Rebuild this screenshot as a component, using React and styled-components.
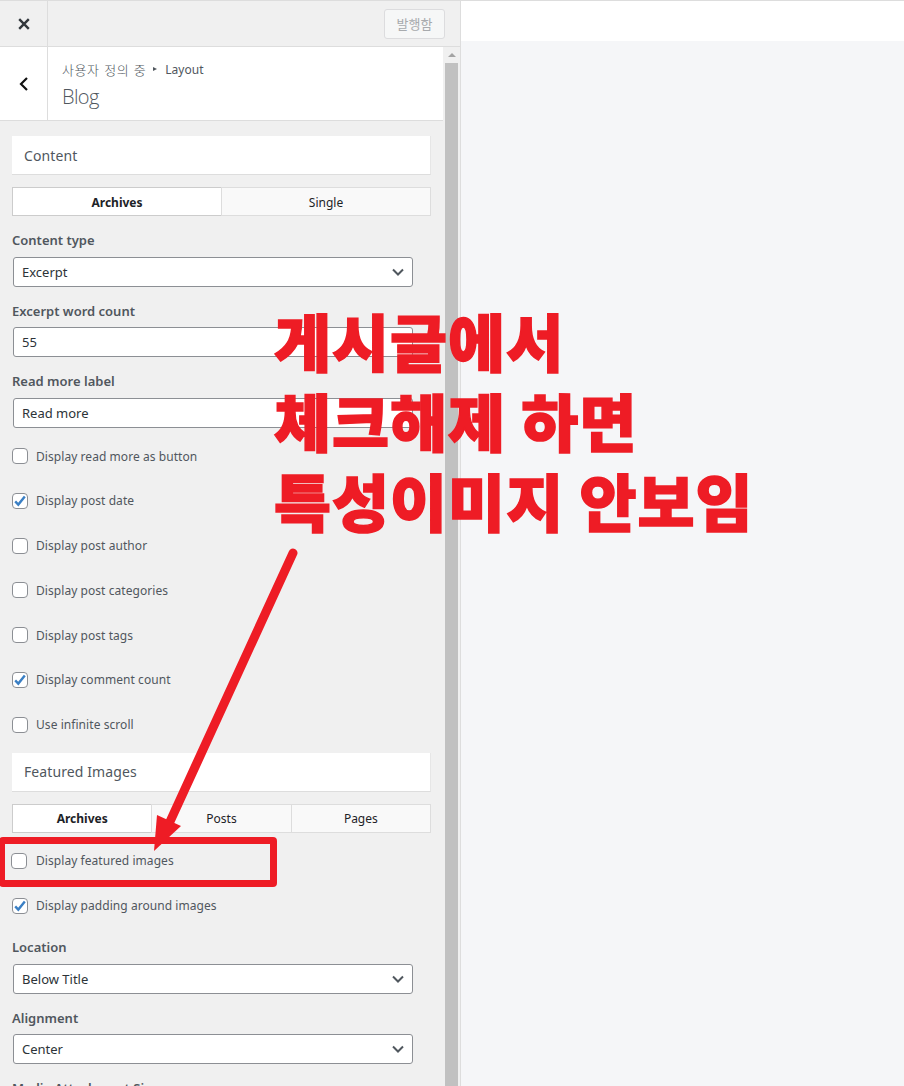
import React from 'react'
import styled, { createGlobalStyle } from 'styled-components'

const Global = createGlobalStyle`
  html, body { margin: 0; padding: 0; height: 100%; }
  body {
    background: #f5f6f8;
    font-family: "Noto Sans", "Noto Sans CJK KR", sans-serif;
    overflow: hidden;
  }
  * { box-sizing: border-box; }
`

const Page = styled.div`
  position: relative;
  display: flex;
  width: 904px;
  height: 1086px;
  overflow: hidden;
`
const Sidebar = styled.aside`
  width: 461px;
  height: 1086px;
  flex: none;
  display: flex;
  flex-direction: column;
  background: #f0f0f0;
  border-right: 1px solid #dddddd;
`
const Topbar = styled.header`
  height: 47px;
  flex: none;
  display: flex;
  align-items: center;
  justify-content: space-between;
  padding-right: 15px;
  border-top: 1px solid #dddddd;
  border-bottom: 1px solid #dddddd;
`
const CloseButton = styled.button`
  width: 48px;
  height: 45px;
  display: flex;
  align-items: center;
  justify-content: center;
  padding: 0;
  border: none;
  border-right: 1px solid #dddddd;
  background: none;
`
const PublishButton = styled.button`
  width: 61px;
  height: 30px;
  border: 1px solid #dcdcde;
  border-radius: 3px;
  background: #f6f7f7;
  color: #a7aaad;
  font-family: "Noto Sans CJK KR", sans-serif;
  font-size: 13px;
  padding: 0;
`
const Main = styled.div`
  flex: 1;
  min-height: 0;
  display: flex;
`
const Scroller = styled.div`
  width: 445px;
  flex: none;
  overflow: hidden;
`
const Scrollbar = styled.div`
  width: 13px;
  flex: none;
  display: flex;
  flex-direction: column;
  align-items: center;
`
const ScrollArrow = styled.span`
  width: 0;
  height: 0;
  border-left: 4px solid transparent;
  border-right: 4px solid transparent;
  border-bottom: 4px solid #a3a3a3;
  margin: 6px 0;
`
const ScrollThumb = styled.div`
  flex: 1;
  width: 100%;
  background: #c1c1c1;
`
const Preview = styled.main`
  flex: 1;
  display: flex;
  flex-direction: column;
`
const PreviewBar = styled.div`
  height: 41px;
  flex: none;
  background: #ffffff;
  border-top: 1px solid #dddddd;
`
const PanelTitle = styled.div`
  width: 443px;
  height: 74px;
  display: flex;
  background: #ffffff;
  border-bottom: 1px solid #dddddd;
`
const BackButton = styled.button`
  width: 48px;
  flex: none;
  display: flex;
  align-items: center;
  justify-content: center;
  padding: 0;
  border: none;
  border-right: 1px solid #dddddd;
  background: none;
`
const TitleText = styled.div`
  padding: 11px 0 0 14px;
`
const Crumb = styled.div`
  display: flex;
  align-items: center;
  height: 22px;
  color: #50575e;
  font-size: 12px;
`
const CrumbKo = styled.span`
  font-family: "Noto Sans CJK KR", sans-serif;
  font-size: 13px;
  font-weight: 300;
  word-spacing: 1px;
  letter-spacing: 0.6px;
`
const CrumbArrow = styled.span`
  width: 0;
  height: 0;
  margin: 0 8px 0 7px;
  border-top: 2.5px solid transparent;
  border-bottom: 2.5px solid transparent;
  border-left: 4px solid #50575e;
`
const PanelName = styled.div`
  color: #50575e;
  font-family: "Open Sans", sans-serif;
  font-size: 20px;
  font-weight: 300;
  line-height: 28px;
  letter-spacing: -0.6px;
  margin-top: 3px;
`
const Content = styled.div`
  width: 431px;
  padding: 15px 0 0 12px;
`
const SectionHead = styled.h3`
  margin: 0;
  height: 39px;
  width: 419px;
  display: flex;
  align-items: center;
  padding-left: 12px;
  background: #ffffff;
  border-bottom: 1px solid #dddddd;
  border-right: 1px solid #e6e6e6;
  color: #50575e;
  font-size: 14px;
  font-weight: 400;
  letter-spacing: 0.1px;
`
const Tabs = styled.div`
  display: flex;
  height: 29px;
  margin-top: 12px;
  margin-bottom: ${p => p.$after}px;
`
const Tab = styled.div`
  flex: 1;
  display: flex;
  align-items: center;
  justify-content: center;
  padding-top: 1px;
  font-size: 12px;
  color: #1d2327;
  font-weight: ${p => (p.$active ? 700 : 400)};
  background: ${p => (p.$active ? '#ffffff' : '#f9f9f9')};
  border: 1px solid ${p => (p.$active ? '#cccccc' : '#dddddd')};
  margin-left: ${p => (p.$first ? 0 : -1)}px;
`
const Field = styled.div`
  margin-bottom: ${p => p.$after}px;
`
const Label = styled.div`
  height: 18px;
  line-height: 18px;
  margin-bottom: ${p => p.$gap}px;
  color: #50575e;
  font-size: 13px;
  font-weight: 600;
`
const SelectBox = styled.div`
  width: 400px;
  height: 30px;
  margin-left: 1px;
  display: flex;
  align-items: center;
  justify-content: space-between;
  padding: 0 7px 0 8px;
  background: #ffffff;
  border: 1px solid #8c8f94;
  border-radius: 3px;
  color: #2c3338;
  font-size: 13px;
`
const TextInput = styled.input`
  display: block;
  width: 400px;
  height: 30px;
  margin-left: 1px;
  padding: 0 8px;
  background: #ffffff;
  border: 1px solid #8c8f94;
  border-radius: 3px;
  color: #2c3338;
  font-family: inherit;
  font-size: 13px;
`
const CheckRow = styled.label`
  display: flex;
  align-items: center;
  height: 20px;
  margin-bottom: ${p => p.$after}px;
  color: #50575e;
  font-size: 12px;
  letter-spacing: 0.06px;
`
const CheckBox = styled.span`
  width: 16px;
  height: 16px;
  flex: none;
  display: flex;
  align-items: center;
  justify-content: center;
  margin-left: ${p => (p.$nudge ? -1 : 0)}px;
  margin-right: ${p => (p.$nudge ? 9 : 8)}px;
  background: #ffffff;
  border: 1px solid #8c8f94;
  border-radius: 4px;
`
const Annotation = styled.div`
  position: absolute;
  left: 274px;
  top: 300px;
  color: #ee1c25;
  font-family: "Noto Sans CJK KR", sans-serif;
  font-size: 62px;
  font-weight: 900;
  line-height: 80px;
  letter-spacing: 1px;
  -webkit-text-stroke: 1.5px #ee1c25;
  white-space: nowrap;
`
const HighlightBox = styled.div`
  position: absolute;
  left: -1px;
  top: 837px;
  width: 278px;
  height: 50px;
  border: solid #ee1c25;
  border-width: 7px 7px 7px 6px;
  border-radius: 4px;
`
const ArrowLayer = styled.svg`
  position: absolute;
  left: 0;
  top: 0;
  pointer-events: none;
`

const Check = () => (
  <svg width="14" height="14" viewBox="0 0 14 14">
    <path d="M2.2 7.4 5.3 10.6 11.8 2.6" fill="none" stroke="#3a7fc4" strokeWidth="2.4" />
  </svg>
)

const Chevron = () => (
  <svg width="14" height="14" viewBox="0 0 14 14">
    <path d="M2 4.5 7 9.5 12 4.5" fill="none" stroke="#50575e" strokeWidth="2" />
  </svg>
)

const Row = ({ label, checked, after = 24.81, nudge }) => (
  <CheckRow $after={after}>
    <CheckBox $nudge={nudge}>{checked && <Check />}</CheckBox>
    {label}
  </CheckRow>
)

const Select = ({ value }) => (
  <SelectBox>
    {value}
    <Chevron />
  </SelectBox>
)

export default function App() {
  return (
    <Page>
      <Global />
      <Sidebar>
        <Topbar>
          <CloseButton aria-label="close">
            <svg width="14" height="14" viewBox="0 0 14 14">
              <path d="M2.2 2.2 11.8 11.8M11.8 2.2 2.2 11.8" stroke="#32373c" strokeWidth="2.4" fill="none" />
            </svg>
          </CloseButton>
          <PublishButton>발행함</PublishButton>
        </Topbar>
        <Main>
          <Scroller>
            <PanelTitle>
              <BackButton aria-label="back">
                <svg width="12" height="16" viewBox="0 0 12 16">
                  <path d="M9 2 3 8 9 14" stroke="#111111" strokeWidth="2.2" fill="none" />
                </svg>
              </BackButton>
              <TitleText>
                <Crumb>
                  <CrumbKo>사용자 정의 중</CrumbKo>
                  <CrumbArrow />
                  Layout
                </Crumb>
                <PanelName>Blog</PanelName>
              </TitleText>
            </PanelTitle>
            <Content>
              <SectionHead>Content</SectionHead>
              <Tabs $after={15}>
                <Tab $first $active>Archives</Tab>
                <Tab>Single</Tab>
              </Tabs>
              <Field $after={15}>
                <Label $gap={8}>Content type</Label>
                <Select value="Excerpt" />
              </Field>
              <Field $after={15}>
                <Label $gap={7}>Excerpt word count</Label>
                <TextInput readOnly value="55" />
              </Field>
              <Field $after={18}>
                <Label $gap={8}>Read more label</Label>
                <TextInput readOnly value="Read more" />
              </Field>
              <Row label="Display read more as button" />
              <Row label="Display post date" checked />
              <Row label="Display post author" />
              <Row label="Display post categories" />
              <Row label="Display post tags" />
              <Row label="Display comment count" checked />
              <Row label="Use infinite scroll" after={18.14} />
              <SectionHead>Featured Images</SectionHead>
              <Tabs $after={18}>
                <Tab $first $active>Archives</Tab>
                <Tab>Posts</Tab>
                <Tab>Pages</Tab>
              </Tabs>
              <Row label="Display featured images" nudge />
              <Row label="Display padding around images" checked after={22.19} />
              <Field $after={15}>
                <Label $gap={8}>Location</Label>
                <Select value="Below Title" />
              </Field>
              <Field $after={15}>
                <Label $gap={7}>Alignment</Label>
                <Select value="Center" />
              </Field>
              <Field $after={15}>
                <Label $gap={8}>Media Attachment Size</Label>
              </Field>
            </Content>
          </Scroller>
          <Scrollbar>
            <ScrollArrow />
            <ScrollThumb />
          </Scrollbar>
        </Main>
      </Sidebar>
      <Preview>
        <PreviewBar />
      </Preview>
      <Annotation>
        게시글에서
        <br />
        체크해제 하면
        <br />
        특성이미지 안보임
      </Annotation>
      <ArrowLayer width="904" height="1086" viewBox="0 0 904 1086">
        <path d="M293 553 168 826" stroke="#ee1c25" strokeWidth="9" strokeLinecap="round" fill="none" />
        <path d="M157 815 181 826 154 851Z" fill="#ee1c25" />
      </ArrowLayer>
      <HighlightBox />
    </Page>
  )
}
